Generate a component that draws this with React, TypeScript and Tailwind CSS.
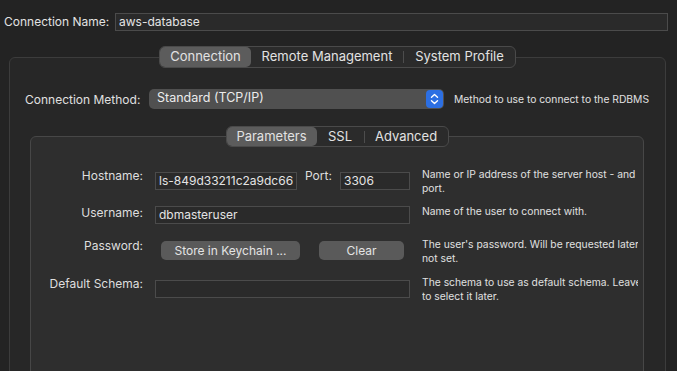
import React from 'react';

const font = { fontFamily: 'Inter, "Noto Sans", sans-serif' };

type Tab = { label: string; w: string };

const TabBar = ({ tabs, active, h }: { tabs: Tab[]; active: number; h: string }) => (
  <div className={`flex ${h} rounded-[6px] border border-[#4a4a4a] bg-[#2b2b2b] text-[13px] text-[#e2e2e2]`}>
    {tabs.map((t, i) => (
      <div key={t.label} className="flex items-center">
        {i > 0 && i !== active && i - 1 !== active && (
          <div className="h-[12px] w-px bg-[#4d4d4d]" />
        )}
        <div
          className={`flex h-full ${t.w} items-center justify-center whitespace-nowrap rounded-[5px] ${
            i === active ? 'bg-[#5c5c5c]' : ''
          }`}
        >
          {t.label}
        </div>
      </div>
    ))}
  </div>
);

const Field = ({ value, w, mt }: { value?: string; w: string; mt: string }) => (
  <div
    className={`${w} ${mt} flex h-[18px] shrink-0 items-center overflow-hidden whitespace-nowrap border border-[#4b4b4b] bg-[#2a2a2a] px-[3px] text-[12px] text-[#e4e4e4]`}
  >
    <span className="block min-w-0 overflow-hidden">{value}</span>
  </div>
);

const Help = ({ lines }: { lines: string[] }) => (
  <div className="ml-[12px] w-[216px] shrink-0 overflow-hidden whitespace-nowrap text-[10.3px] leading-[13.5px] text-[#e0e0e0]">
    {lines.map(l => (
      <div key={l}>{l}</div>
    ))}
  </div>
);

const Label = ({ text }: { text: string }) => (
  <div className="w-[112px] shrink-0 whitespace-nowrap text-right text-[12px] leading-[16px] text-[#dedede]">{text}</div>
);

export default function App() {
  return (
    <div style={font} className="h-[371px] w-[677px] overflow-hidden bg-[#232323] pt-[13px]">
      <div className="flex items-center">
        <div className="w-[115px] whitespace-nowrap pl-[4px] text-[12px] text-[#e2e2e2]">Connection Name:</div>
        <Field value="aws-database" w="w-[553px]" mt="mt-0" />
      </div>

      <div className="ml-[9px] mt-[26px] h-[330px] w-[657px] rounded-[6px] border border-[#3c3c3c] bg-[#272727]">
        <div className="-mt-[12px] flex justify-center">
          <TabBar
            h="h-[22px]"
            active={0}
            tabs={[
              { label: 'Connection', w: 'w-[91px]' },
              { label: 'Remote Management', w: 'w-[152px]' },
              { label: 'System Profile', w: 'w-[111px]' },
            ]}
          />
        </div>

        <div className="mt-[20px] flex items-center pl-[15px]">
          <div className="mt-[3px] w-[124px] whitespace-nowrap text-[12px] text-[#e0e0e0]">Connection Method:</div>
          <div className="flex h-[20px] w-[295px] items-center justify-between rounded-[5px] bg-[#505050] pl-[8px] pr-[1px] text-[12.5px] text-[#ececec]">
            <span>Standard (TCP/IP)</span>
            <div className="flex h-[18px] w-[17px] items-center justify-center rounded-[4px] bg-[#2c6fe3]">
              <svg width="9" height="12" viewBox="0 0 9 12" fill="none" stroke="white" strokeWidth="1.4" strokeLinecap="round" strokeLinejoin="round">
                <path d="M1.5 4.2 L4.5 1.5 L7.5 4.2" />
                <path d="M1.5 7.8 L4.5 10.5 L7.5 7.8" />
              </svg>
            </div>
          </div>
          <div className="ml-[10px] mt-[3px] whitespace-nowrap text-[10.3px] text-[#e0e0e0]">Method to use to connect to the RDBMS</div>
        </div>

        <div className="ml-[20px] mt-[27px] h-[300px] w-[614px] rounded-[6px] border border-[#474747] bg-[#2e2e2e]">
          <div className="-mt-[11px] flex justify-center">
            <TabBar
              h="h-[21px]"
              active={0}
              tabs={[
                { label: 'Parameters', w: 'w-[90px]' },
                { label: 'SSL', w: 'w-[47px]' },
                { label: 'Advanced', w: 'w-[83px]' },
              ]}
            />
          </div>

          <div className="mt-[21px] flex h-[37px] items-start">
            <Label text="Hostname:" />
            <div className="ml-[12px] flex items-start">
              <Field value="ls-849d33211c2a9dc66658ca3a1c9b0c7f1f3" w="w-[142px]" mt="mt-[4px]" />
              <div className="ml-[8px] w-[35px] text-[12px] leading-[16px] text-[#dedede]">Port:</div>
              <Field value="3306" w="w-[70px]" mt="mt-[4px]" />
            </div>
            <Help lines={['Name or IP address of the server host - and TCP/IP', 'port.']} />
          </div>

          <div className="flex h-[33px] items-start">
            <Label text="Username:" />
            <div className="ml-[12px]">
              <Field value="dbmasteruser" w="w-[255px]" mt="mt-[1px]" />
            </div>
            <Help lines={['Name of the user to connect with.']} />
          </div>

          <div className="flex h-[38px] items-start">
            <Label text="Password:" />
            <div className="ml-[18px] mt-[3px] flex w-[249px] shrink-0 text-[12px] text-[#e4e4e4]">
              <div className="flex h-[19px] w-[139px] items-center justify-center rounded-[5px] bg-[#5a5a5a]">Store in Keychain ...</div>
              <div className="ml-[19px] flex h-[19px] w-[85px] items-center justify-center rounded-[5px] bg-[#5a5a5a]">Clear</div>
            </div>
            <Help lines={["The user's password. Will be requested later if it's", 'not set.']} />
          </div>

          <div className="flex items-start">
            <Label text="Default Schema:" />
            <div className="ml-[12px]">
              <Field w="w-[255px]" mt="mt-[4px]" />
            </div>
            <Help lines={['The schema to use as default schema. Leave blank', 'to select it later.']} />
          </div>
        </div>
      </div>
    </div>
  );
}
